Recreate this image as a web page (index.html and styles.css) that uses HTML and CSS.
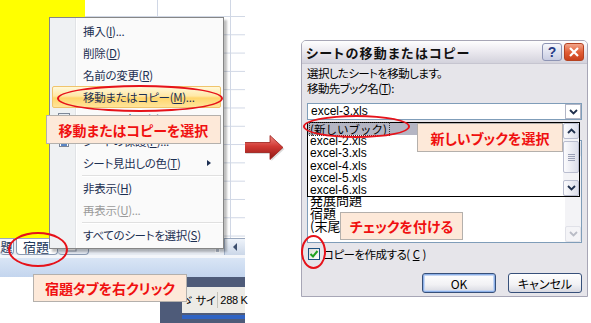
FILE: index.html
```html
<!DOCTYPE html>
<html lang="ja">
<head>
    <meta charset="UTF-8">
    <meta name="viewport" content="width=device-width, initial-scale=1.0">
    <title>シートの移動またはコピー</title>
    <link rel="stylesheet" href="styles.css">
</head>
<body>
    <div class="page">
        <!-- left: excel sheet with the tab context menu -->
        <div class="excel">
            <div class="sheet">
                <div class="fill"></div>
                <div class="cells"></div>
            </div>
            <div class="tabbar">
                <div class="tab tab-cut">題</div>
                <div class="tab tab-active">宿題</div>
                <div class="tab tab-new">
                    <svg width="14" height="10" viewBox="0 0 14 10"><rect x="1" y="2" width="9" height="7" fill="#fff" stroke="#8a94a8"/><path d="M9 1l4 0" stroke="#e3a32a" stroke-width="2"/></svg>
                </div>
                <div class="tab-space"></div>
                <div class="split"></div>
                <div class="hscroll-btn">
                    <svg width="6" height="8" viewBox="0 0 6 8"><path d="M5 0L1 4l4 4z" fill="#3c4f6e"/></svg>
                </div>
            </div>
            <div class="statusbar"></div>
            <div class="desk">
                <div class="explorer">
                    <div class="explorer-status"><span class="pane">ゞ サイ</span><span class="pane">288 K</span></div>
                    <div class="explorer-line"></div>
                </div>
            </div>

            <div class="ctx-menu">
                <div class="mi">挿入(<u>I</u>)...</div>
                <div class="mi">削除(<u>D</u>)</div>
                <div class="mi">名前の変更(<u>R</u>)</div>
                <div class="mi mi-hover">移動またはコピー(<u>M</u>)...</div>
                <div class="mi">
                    <svg class="mi-icon" width="14" height="14" viewBox="0 0 14 14"><rect x="1.5" y="1.5" width="11" height="11" fill="#e8ecf2" stroke="#7d8797"/><path d="M4 5h6M4 8h6" stroke="#5a6a86"/></svg>
                    コードの表示(<u>V</u>)
                </div>
                <div class="mi">
                    <svg class="mi-icon" width="14" height="14" viewBox="0 0 14 14"><rect x="2.5" y="1.5" width="9" height="11" fill="#fff" stroke="#7d8797"/><rect x="4" y="7" width="6" height="5" fill="#5b86c5"/><path d="M5 7V5.5a2 2 0 0 1 4 0V7" fill="none" stroke="#8a6a2a"/></svg>
                    シートの保護(<u>P</u>)...
                </div>
                <div class="mi">シート見出しの色(<u>T</u>)<span class="mi-sub"></span></div>
                <div class="mi-sep"></div>
                <div class="mi">非表示(<u>H</u>)</div>
                <div class="mi mi-disabled">再表示(<u>U</u>)...</div>
                <div class="mi-sep"></div>
                <div class="mi">すべてのシートを選択(<u>S</u>)</div>
            </div>
        </div>

        <div class="arrow-col">
            <svg class="arrow" width="42" height="28" viewBox="0 0 42 28">
                <defs>
                    <linearGradient id="arrowFill" x1="0" y1="0" x2="0" y2="1">
                        <stop offset="0" stop-color="#f08a84"/>
                        <stop offset="0.45" stop-color="#d13a34"/>
                        <stop offset="1" stop-color="#8e1612"/>
                    </linearGradient>
                </defs>
                <path d="M1 8.5h26V1.5l13 12-13 12v-7H1z" fill="#9a9a9a" opacity="0.35" transform="translate(1.5 1.5)"/>
                <path d="M1 8.5h26V1.5l13 12-13 12v-7H1z" fill="url(#arrowFill)" stroke="#9b1d18" stroke-width="0.8"/>
            </svg>
        </div>

        <!-- right: move or copy dialog -->
        <div class="dialog">
            <div class="titlebar">
                <span class="title">シートの移動またはコピー</span>
                <span class="tb-btn tb-help">?</span>
                <span class="tb-btn tb-close">
                    <svg width="12" height="12" viewBox="0 0 12 12"><path d="M2 2l8 8M10 2l-8 8" stroke="#fff" stroke-width="2.2"/></svg>
                </span>
            </div>
            <div class="dlg-body">
                <div class="line">選択したシートを移動します。</div>
                <div class="line">移動先ブック名(<u>T</u>):</div>
                <div class="combo">
                    <span class="combo-text">excel-3.xls</span>
                    <span class="combo-btn">
                        <svg width="9" height="6" viewBox="0 0 9 6"><path d="M1 1l3.5 3.5L8 1" fill="none" stroke="#1f2f4c" stroke-width="1.8"/></svg>
                    </span>
                </div>
                <div class="line">挿入先(<u>B</u>):</div>
                <div class="listbox">
                    <div class="lb-items">
                        <div class="lb-item">練習問題1</div>
                        <div class="lb-item">練習問題2</div>
                        <div class="lb-item">基本問題</div>
                        <div class="lb-item">応用問題</div>
                        <div class="lb-item">発展問題</div>
                        <div class="lb-item">宿題</div>
                        <div class="lb-item">(末尾へ移動)</div>
                    </div>
                    <div class="vscroll vscroll-off">
                        <div class="sb-btn"></div>
                        <div class="sb-track"></div>
                        <div class="sb-btn">
                            <svg width="9" height="6" viewBox="0 0 9 6"><path d="M1 1l3.5 3.5L8 1" fill="none" stroke="#b9bcc6" stroke-width="1.8"/></svg>
                        </div>
                    </div>
                </div>
                <div class="check-row">
                    <span class="checkbox">
                        <svg width="10" height="10" viewBox="0 0 10 10"><path d="M1.5 5l2.5 2.5L8.5 2" fill="none" stroke="#21a121" stroke-width="2"/></svg>
                    </span>
                    コピーを作成する(<u>C</u>)
                </div>
                <div class="buttons">
                    <div class="btn btn-default">OK</div>
                    <div class="btn">キャンセル</div>
                </div>

                <div class="droplist">
                    <div class="dl-items">
                        <div class="dl-item dl-selected"><span class="dl-focus">(新しいブック)</span></div>
                        <div class="dl-item">excel-2.xls</div>
                        <div class="dl-item">excel-3.xls</div>
                        <div class="dl-item">excel-4.xls</div>
                        <div class="dl-item">excel-5.xls</div>
                        <div class="dl-item">excel-6.xls</div>
                    </div>
                    <div class="vscroll">
                        <div class="sb-btn">
                            <svg width="9" height="6" viewBox="0 0 9 6"><path d="M1 5l3.5-3.5L8 5" fill="none" stroke="#1f2f4c" stroke-width="1.8"/></svg>
                        </div>
                        <div class="sb-thumb"><span class="grip"></span></div>
                        <div class="sb-track"></div>
                        <div class="sb-btn">
                            <svg width="9" height="6" viewBox="0 0 9 6"><path d="M1 1l3.5 3.5L8 1" fill="none" stroke="#1f2f4c" stroke-width="1.8"/></svg>
                        </div>
                    </div>
                </div>
            </div>
        </div>

        <!-- annotations -->
        <div class="ring ring-menu"></div>
        <div class="callout callout-menu">移動またはコピーを選択</div>
        <div class="ring ring-tab"></div>
        <div class="callout callout-tab">宿題タブを右クリック</div>
        <div class="ring ring-book"></div>
        <div class="callout callout-book">新しいブックを選択</div>
        <div class="callout callout-check">チェックを付ける</div>
        <div class="ring ring-check"></div>
    </div>
</body>
</html>
```

FILE: styles.css
```css
body {
    margin: 0;
    background: #fff;
    font-family: "Noto Sans CJK JP", "Liberation Sans", sans-serif;
    font-feature-settings: "palt";
    color: #000;
}

.page {
    position: relative;
    display: flex;
    width: 591px;
    height: 323px;
    overflow: hidden;
}

u {
    text-decoration: underline;
    text-underline-offset: 1px;
}

/* ---------- excel ---------- */

.excel {
    position: relative;
    width: 245px;
    display: flex;
    flex-direction: column;
}

.sheet {
    display: flex;
    height: 238px;
}

.fill {
    width: 85px;
    background: #ffff00;
}

.cells {
    flex: 1;
    background-color: #fff;
    background-image:
        linear-gradient(to right, #d0d7e5 1px, transparent 1px),
        linear-gradient(to bottom, #d0d7e5 1px, transparent 1px);
    background-size: 73px 100%, 100% 18.3px;
    background-position: 72px 0, 0 16px;
}

.tabbar {
    display: flex;
    align-items: stretch;
    height: 17px;
    background: #e6ebf2;
    border-top: 1px solid #9aa8bd;
    box-sizing: border-box;
}

.tab {
    display: flex;
    align-items: center;
    font-size: 13px;
    color: #1e395b;
    padding: 0 4px;
    background: #f4f6fa;
    border-right: 1px solid #8b9bb3;
    border-bottom: 1px solid #8b9bb3;
    border-radius: 0 0 4px 4px;
}

.tab-cut {
    width: 13px;
    padding: 0;
    font-size: 12px;
    justify-content: center;
}

.tab-active {
    margin-left: 2px;
    padding: 0 8px 0 6px;
    background: #fff;
    border-left: 1px solid #8b9bb3;
}

.tab-new {
    width: 30px;
    padding: 0;
    justify-content: center;
    background: #e2e8f1;
}

.tab-space {
    flex: 1;
}

.split {
    width: 3px;
    margin: 2px 4px 2px 0;
    background: #b3bccb;
    border: 1px solid #f7f9fc;
}

.hscroll-btn {
    width: 20px;
    display: flex;
    align-items: center;
    justify-content: center;
    background: linear-gradient(#eef3fa, #cbd7e8);
    border-left: 1px solid #a3b3ca;
}

.statusbar {
    height: 22px;
    box-sizing: border-box;
    border-top: 3px solid #f3f6fa;
    background: linear-gradient(#d9e5f5, #c3d5ee);
}

.desk {
    flex: 1;
    display: flex;
    justify-content: flex-end;
}

.explorer {
    width: 85px;
    background: #4e5b79;
    padding: 10px 0 0 22px;
    box-sizing: border-box;
}

.explorer-status {
    display: flex;
    height: 26px;
    align-items: center;
    background: #ecebe6;
    font-size: 11px;
    font-family: "Liberation Sans", "Noto Sans CJK JP", sans-serif;
    letter-spacing: -0.3px;
    white-space: nowrap;
}

.pane {
    padding: 0 2px;
    border-right: 1px solid #c4c2b8;
}

.pane + .pane {
    border-right: 0;
}

.explorer-line {
    height: 4px;
    margin-top: 2px;
    background: #2f63c3;
}

/* context menu */

.ctx-menu {
    position: absolute;
    left: 49px;
    top: 17px;
    width: 175px;
    box-sizing: border-box;
    padding: 2px 0;
    background: linear-gradient(to right, #eff1f3 25px, #e1e3e6 25px, #e1e3e6 26px, #fff 26px, #fff 27px, #fafafa 27px);
    border: 1px solid #868686;
    box-shadow: 3px 3px 2px rgba(0, 0, 0, 0.25);
}

.mi {
    position: relative;
    height: 22px;
    box-sizing: border-box;
    margin: 0 2px;
    padding-left: 30px;
    border: 1px solid transparent;
    border-radius: 2px;
    display: flex;
    align-items: center;
    font-size: 11.5px;
    letter-spacing: -0.3px;
    color: #1c2f52;
    white-space: nowrap;
}

.mi-hover {
    background: linear-gradient(#fff8d9, #ffe8a6 45%, #ffd66b 55%, #ffe49a);
    border-color: #f0c46c;
}

.mi-disabled {
    color: #9a9a9a;
}

.mi-icon {
    position: absolute;
    left: 4px;
    top: 3px;
}

.mi-sub {
    position: absolute;
    right: 9px;
    top: 7px;
    border-left: 4px solid #1c2f52;
    border-top: 3.5px solid transparent;
    border-bottom: 3.5px solid transparent;
}

.mi-sep {
    height: 3px;
    margin-left: 32px;
    background: linear-gradient(#e0e0e0 1px, #fff 1px, #fff 2px, transparent 2px);
    background-position: 0 1px;
    background-repeat: no-repeat;
}

/* ---------- arrow ---------- */

.arrow-col {
    width: 56px;
    padding-top: 134px;
    box-sizing: border-box;
}

.arrow {
    display: block;
    margin-left: -2px;
}

/* ---------- dialog ---------- */

.dialog {
    width: 287px;
    height: 257px;
    margin-top: 40px;
    box-sizing: border-box;
    border: 1px solid #a7a6b6;
    border-radius: 5px 5px 0 0;
    background: #e6e5ea;
    display: flex;
    flex-direction: column;
}

.titlebar {
    height: 22px;
    display: flex;
    align-items: center;
    padding: 0 3px 0 4px;
    border-radius: 4px 4px 0 0;
    background: linear-gradient(#fefefe, #eceaf0 45%, #d3d2dc);
    border-bottom: 1px solid #c6c5d0;
}

.title {
    font-size: 13px;
    font-weight: bold;
    letter-spacing: 1.3px;
    color: #111;
}

.tb-btn {
    width: 20px;
    height: 18px;
    box-sizing: border-box;
    border-radius: 3px;
    display: flex;
    align-items: center;
    justify-content: center;
}

.tb-help {
    margin-left: auto;
    margin-right: 2px;
    border: 1px solid #8d94b4;
    background: linear-gradient(#f6f7fc, #c9cde2);
    color: #283b86;
    font: bold 14px "Liberation Sans", sans-serif;
}

.tb-close {
    border: 1px solid #b54221;
    background: linear-gradient(#f2a58b, #e25f37 50%, #c9401b);
}

.dlg-body {
    position: relative;
    flex: 1;
    padding: 2px 5px 0;
    display: flex;
    flex-direction: column;
}

.line {
    font-size: 11.5px;
    line-height: 15px;
    letter-spacing: -0.6px;
    white-space: nowrap;
}

.combo {
    display: flex;
    height: 17px;
    margin: 7px 0 3px;
    box-sizing: border-box;
    border: 1px solid #7f9db9;
    background: #fff;
}

.combo-text {
    flex: 1;
    padding-left: 3px;
    font: 12px/15px "Liberation Sans", sans-serif;
}

.combo-btn {
    width: 16px;
    display: flex;
    align-items: center;
    justify-content: center;
    border: 1px solid #b2b6c6;
    box-sizing: border-box;
    background: #fff;
}

.listbox {
    display: flex;
    height: 103px;
    margin-top: 2px;
    box-sizing: border-box;
    border: 1px solid #7f9db9;
    background: #fff;
}

.lb-items {
    flex: 1;
    padding-left: 2px;
}

.lb-item {
    height: 13px;
    font-size: 13px;
    line-height: 13px;
    white-space: nowrap;
}

.vscroll {
    width: 16px;
    display: flex;
    flex-direction: column;
    background: #f3f3f6;
}

.sb-btn {
    height: 16px;
    display: flex;
    align-items: center;
    justify-content: center;
    box-sizing: border-box;
    border: 1px solid #b9bdcf;
    border-radius: 2px;
    background: linear-gradient(to right, #fbfbfd, #dcdeea);
}

.sb-track {
    flex: 1;
}

.vscroll-off .sb-btn {
    border-color: #e0e1e8;
    background: #f4f4f7;
}

.sb-thumb {
    height: 32px;
    margin-top: 2px;
    display: flex;
    align-items: center;
    justify-content: center;
    box-sizing: border-box;
    border: 1px solid #b9bdcf;
    border-radius: 2px;
    background: linear-gradient(to right, #fbfbfd, #dcdeea);
}

.grip {
    width: 7px;
    height: 7px;
    background: repeating-linear-gradient(#9aa0b6 0 1px, transparent 1px 2px);
}

.check-row {
    display: flex;
    align-items: center;
    gap: 3px;
    height: 15px;
    margin-top: 3px;
    font-size: 11.5px;
    letter-spacing: -0.5px;
    white-space: nowrap;
}

.checkbox {
    width: 12px;
    height: 12px;
    margin-left: 1px;
    box-sizing: border-box;
    border: 1px solid #1c5180;
    background: linear-gradient(135deg, #dcdcd7, #fff);
    display: flex;
    align-items: center;
    justify-content: center;
}

.buttons {
    display: flex;
    justify-content: flex-end;
    gap: 12px;
    margin-top: 12px;
}

.btn {
    width: 74px;
    height: 20px;
    box-sizing: border-box;
    border: 1px solid #37507a;
    border-radius: 3px;
    background: linear-gradient(#ffffff, #f1f1f4 60%, #d7d8e1);
    display: flex;
    align-items: center;
    justify-content: center;
    font-size: 12px;
}

.btn-default {
    box-shadow: inset 0 0 0 1px #8cb0e8, inset 0 0 0 2px #c5d6f3;
}

.droplist {
    position: absolute;
    left: 5px;
    top: 58px;
    width: 273px;
    height: 75px;
    box-sizing: border-box;
    border: 1px solid #000;
    background: #fff;
    display: flex;
}

.dl-items {
    flex: 1;
}

.dl-item {
    height: 12.2px;
    padding-left: 2px;
    font: 12px/12.2px "Liberation Sans", "Noto Sans CJK JP", sans-serif;
    white-space: nowrap;
}

.dl-selected {
    background: #b4b5c3;
}

.dl-focus {
    display: inline-block;
    outline: 1px dotted #333;
    outline-offset: 0;
    padding-right: 2px;
    font-family: "Noto Sans CJK JP", sans-serif;
    font-size: 11.5px;
}

/* ---------- annotations ---------- */

.ring {
    position: absolute;
    box-sizing: border-box;
    border: 2px solid #e6121a;
    border-radius: 50%;
}

.ring-menu {
    left: 57px;
    top: 85px;
    width: 166px;
    height: 27px;
}

.ring-tab {
    left: 8px;
    top: 232px;
    width: 60px;
    height: 35px;
}

.ring-book {
    left: 303px;
    top: 115px;
    width: 107px;
    height: 23px;
}

.ring-check {
    left: 301px;
    top: 235px;
    width: 25px;
    height: 34px;
}

.callout {
    position: absolute;
    box-sizing: border-box;
    display: flex;
    align-items: center;
    justify-content: center;
    background: #fde9d9;
    border: 1px solid #b4b0ac;
    color: #f01010;
    font-size: 14px;
    font-weight: bold;
    white-space: nowrap;
}

.callout-menu {
    left: 46px;
    top: 115px;
    width: 175px;
    height: 29px;
}

.callout-tab {
    left: 33px;
    top: 274px;
    width: 154px;
    height: 28px;
}

.callout-book {
    left: 417px;
    top: 123px;
    width: 146px;
    height: 29px;
}

.callout-check {
    left: 340px;
    top: 212px;
    width: 123px;
    height: 28px;
}
```
